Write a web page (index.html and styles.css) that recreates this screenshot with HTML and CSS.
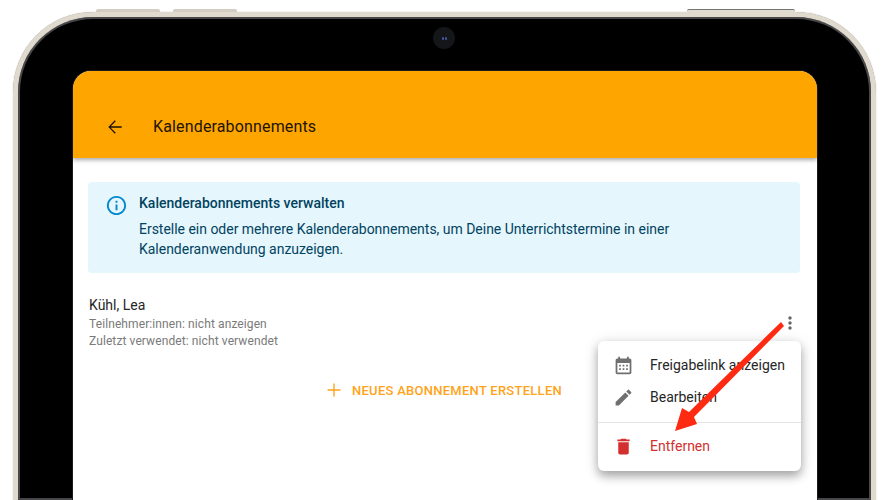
FILE: index.html
```html
<!DOCTYPE html>
<html lang="de">
  <head>
    <meta charset="utf-8">
    <title>Kalenderabonnements</title>
    <link rel="stylesheet" href="styles.css">
  </head>
  <body>
    <div class="device">
      <span class="nub nub-one"></span>
      <span class="nub nub-two"></span>
      <span class="nub nub-three"></span>
      <span class="camera"><span class="lens"></span><span class="lens"></span></span>
      <div class="screen">
        <header class="appbar">
          <svg class="back" viewBox="0 0 24 24"><path d="M20 11.2H6.9l6-6L11.800 4 4 12l7.800 8 1.100-1.200-6-6H20v-1.600z"/></svg>
          <span class="appbar-title">Kalenderabonnements</span>
        </header>
        <main class="content">
          <section class="notice">
            <svg class="notice-icon" viewBox="0 0 24 24"><path d="M11 7h2v2h-2zm0 4h2v6h-2zm1-9C6.48 2 2 6.48 2 12s4.48 10 10 10 10-4.48 10-10S17.52 2 12 2zm0 18c-4.41 0-8-3.59-8-8s3.59-8 8-8 8 3.59 8 8-3.59 8-8 8z"/></svg>
            <div>
              <div class="notice-title">Kalenderabonnements verwalten</div>
              <p class="notice-text">Erstelle ein oder mehrere Kalenderabonnements, um Deine Unterrichtstermine in einer Kalenderanwendung anzuzeigen.</p>
            </div>
          </section>
          <section class="subscription">
            <div>
              <div class="sub-name">Kühl, Lea</div>
              <div class="sub-meta">Teilnehmer:innen: nicht anzeigen</div>
              <div class="sub-meta">Zuletzt verwendet: nicht verwendet</div>
            </div>
            <svg class="more" viewBox="0 0 24 24"><path d="M12 8c1.1 0 2-.9 2-2s-.9-2-2-2-2 .9-2 2 .9 2 2 2zm0 2c-1.1 0-2 .9-2 2s.9 2 2 2 2-.9 2-2-.9-2-2-2zm0 6c-1.1 0-2 .9-2 2s.9 2 2 2 2-.9 2-2-.9-2-2-2z"/></svg>
          </section>
          <div class="add-row">
            <svg class="add-icon" viewBox="0 0 24 24"><path d="M19 12.75h-6.25V19h-1.5v-6.25H5v-1.5h6.25V5h1.5v6.25H19z"/></svg>
            <span class="add-label">NEUES ABONNEMENT ERSTELLEN</span>
          </div>
        </main>
        <div class="menu">
          <div class="menu-item">
            <svg class="menu-icon" viewBox="0 0 24 24"><path d="M19 4h-1V2h-2v2H8V2H6v2H5c-1.110 0-2 .9-2 2v14c0 1.100.89 2 2 2h14c1.100 0 2-.9 2-2V6c0-1.100-.9-2-2-2zm0 16H5V9h14v11zM7 11h2v2H7zm4 0h2v2h-2zm4 0h2v2h-2zM7 15h2v2H7zm4 0h2v2h-2zm4 0h2v2h-2z"/></svg>
            <span>Freigabelink anzeigen</span>
          </div>
          <div class="menu-item">
            <svg class="menu-icon" viewBox="0 0 24 24"><path d="M3 17.25V21h3.75L17.81 9.94l-3.75-3.75L3 17.25zM20.71 7.04c.39-.39.39-1.02 0-1.41l-2.34-2.34c-.39-.39-1.02-.39-1.41 0l-1.83 1.83 3.75 3.75 1.83-1.83z"/></svg>
            <span>Bearbeiten</span>
          </div>
          <div class="menu-divider"></div>
          <div class="menu-item danger">
            <svg class="menu-icon" viewBox="0 0 24 24"><path d="M6 19c0 1.1.9 2 2 2h8c1.1 0 2-.9 2-2V7H6v12zM19 4h-3.5l-1-1h-5l-1 1H5v2h14V4z"/></svg>
            <span>Entfernen</span>
          </div>
        </div>
      </div>
    </div>
    <svg class="arrow" viewBox="0 0 890 500"><polygon points="781,322 784,326 694,417 697,424 675,431 682,408 689,412"/></svg>
  </body>
</html>
```

FILE: styles.css
```css
html, body{
  margin: 0;
  height: 500px;
  overflow: hidden;
  background: #fff;
}
body{
  font-family: Roboto, "Liberation Sans", sans-serif;
  padding: 12px 0 0 13px;
  box-sizing: border-box;
  position: relative;
}
.device{
  position: relative;
  width: 863px;
  height: 488px;
  box-sizing: border-box;
  display: flex;
  flex-direction: column;
  padding: 53px 54px 0 53px;
  background: #000;
  border: 5px solid #dfd9ce;
  border-bottom: 0;
  border-radius: 80px 80px 0 0;
  box-shadow: inset 0 0 0 2px #47474a, 0 0 1px #8f8a80;
}
.nub{
  position: absolute;
  top: -8px;
  height: 3px;
  background: #d3cdc1;
  border-radius: 2px 2px 0 0;
}
.nub-one{ left: 78px; width: 64px; }
.nub-two{ left: 155px; width: 64px; }
.nub-three{ left: 669px; width: 108px; background: #e0dbd0; border-top: 1px solid #77756f; height: 2px; }
.camera{
  position: absolute;
  top: 10px;
  left: 415px;
  width: 22px;
  height: 22px;
  border-radius: 50%;
  background: #14161a;
  display: flex;
  align-items: center;
  justify-content: center;
  gap: 1px;
}
.lens{
  width: 2px;
  height: 3px;
  border-radius: 50%;
  background: #4a5cb0;
}
.screen{
  position: relative;
  flex: 1;
  margin-top: 1px;
  margin-left: 2px;
  background: #fff;
  border-radius: 18px 18px 0 0;
  box-shadow: 0 0 0 1px #1c1c1c;
}
.appbar{
  height: 87px;
  box-sizing: border-box;
  padding: 24px 0 0 32px;
  background: #ffa500;
  border-radius: 18px 18px 0 0;
  display: flex;
  align-items: center;
  gap: 28px;
  box-shadow: 0 2px 4px rgba(0,0,0,0.35);
  color: #201400;
}
.back{
  width: 20px;
  height: 20px;
  fill: #1a1000;
}
.appbar-title{
  font-size: 16px;
  letter-spacing: 0.15px;
}
.content{
  padding: 24px 17px 0 15px;
}
.notice{
  display: flex;
  gap: 11px;
  height: 91px;
  box-sizing: border-box;
  padding: 12px 16px 0 17px;
  background: #e5f6fd;
  border-radius: 4px;
  color: #014361;
}
.notice-icon{
  width: 23px;
  height: 23px;
  fill: #0288d1;
  flex: none;
}
.notice-title{
  font-size: 14px;
  font-weight: 500;
  line-height: 18px;
}
.notice-text{
  margin: 7px 0 0 0;
  font-size: 14px;
  line-height: 20px;
  letter-spacing: -0.02px;
}
.subscription{
  display: flex;
  justify-content: space-between;
  align-items: center;
  padding: 23px 0 0 1px;
}
.sub-name{
  font-size: 14px;
  line-height: 18px;
  color: #262626;
  margin-bottom: 2px;
}
.sub-meta{
  font-size: 12px;
  line-height: 17px;
  letter-spacing: 0.1px;
  color: #7a7a7a;
}
.more{
  width: 20px;
  height: 20px;
  fill: #666;
}
.add-row{
  display: flex;
  align-items: center;
  justify-content: center;
  gap: 7px;
  margin-top: 29px;
  color: #ffa31a;
  padding-right: 3px;
}
.add-icon{
  width: 22px;
  height: 22px;
  fill: #ffa31a;
}
.add-label{
  font-size: 13px;
  font-weight: 500;
  letter-spacing: 0.27px;
}
.menu{
  position: absolute;
  top: 270px;
  left: 525px;
  width: 203px;
  height: 130px;
  box-sizing: border-box;
  padding-top: 8px;
  background: #fff;
  border-radius: 6px;
  box-shadow: 0 5px 10px rgba(0,0,0,0.3), 0 2px 16px rgba(0,0,0,0.12);
}
.menu-item{
  display: flex;
  align-items: center;
  gap: 16px;
  height: 32px;
  padding-left: 15px;
  font-size: 14px;
  color: #262626;
}
.menu-icon{
  width: 21px;
  height: 21px;
  fill: #6f6f6f;
  flex: none;
}
.menu-divider{
  height: 1px;
  margin: 9px 0 7px 0;
  background: #e4e4e4;
}
.danger{ color: #d32f2f; }
.danger .menu-icon{ fill: #d32f2f; }
.arrow{
  position: absolute;
  top: 0;
  left: 0;
  width: 890px;
  height: 500px;
  fill: #ff2a12;
}
```
